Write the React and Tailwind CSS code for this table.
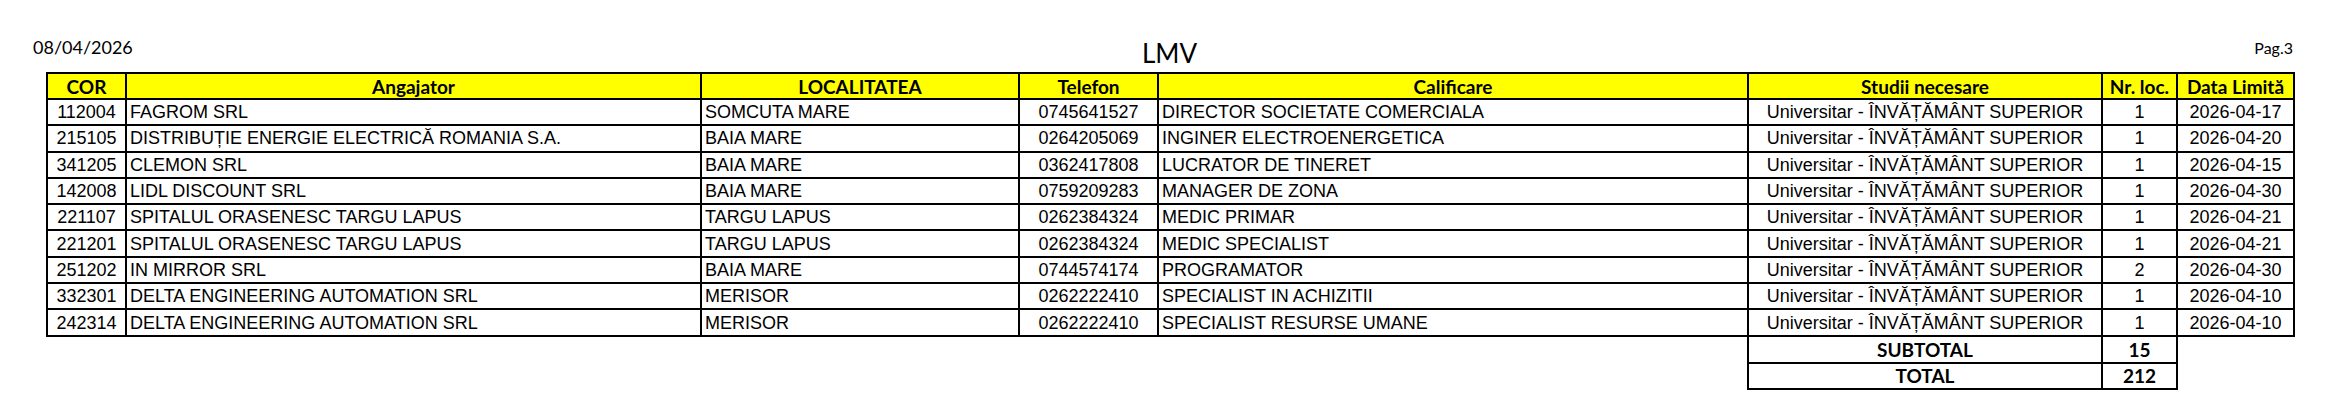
import React from 'react';

const rows = [
    ['112004', 'FAGROM SRL', 'SOMCUTA MARE', '0745641527', 'DIRECTOR SOCIETATE COMERCIALA', '1', '2026-04-17'],
    ['215105', 'DISTRIBUȚIE ENERGIE ELECTRICĂ ROMANIA S.A.', 'BAIA MARE', '0264205069', 'INGINER ELECTROENERGETICA', '1', '2026-04-20'],
    ['341205', 'CLEMON SRL', 'BAIA MARE', '0362417808', 'LUCRATOR DE TINERET', '1', '2026-04-15'],
    ['142008', 'LIDL DISCOUNT SRL', 'BAIA MARE', '0759209283', 'MANAGER DE ZONA', '1', '2026-04-30'],
    ['221107', 'SPITALUL ORASENESC TARGU LAPUS', 'TARGU LAPUS', '0262384324', 'MEDIC PRIMAR', '1', '2026-04-21'],
    ['221201', 'SPITALUL ORASENESC TARGU LAPUS', 'TARGU LAPUS', '0262384324', 'MEDIC SPECIALIST', '1', '2026-04-21'],
    ['251202', 'IN MIRROR SRL', 'BAIA MARE', '0744574174', 'PROGRAMATOR', '2', '2026-04-30'],
    ['332301', 'DELTA ENGINEERING AUTOMATION SRL', 'MERISOR', '0262222410', 'SPECIALIST IN ACHIZITII', '1', '2026-04-10'],
    ['242314', 'DELTA ENGINEERING AUTOMATION SRL', 'MERISOR', '0262222410', 'SPECIALIST RESURSE UMANE', '1', '2026-04-10'],
];

const headers = ['COR', 'Angajator', 'LOCALITATEA', 'Telefon', 'Calificare', 'Studii necesare', 'Nr. loc.', 'Data Limită'];
const widths = ['w-[79px]', 'w-[575px]', 'w-[318px]', 'w-[139px]', 'w-[590px]', 'w-[354px]', 'w-[75px]', 'w-[117px]'];

const head = "font-['Lato','Open_Sans',sans-serif]";
const body = "font-['Liberation_Sans_Narrow','Liberation_Sans',sans-serif]";

const App = () => {
    return (
        <div className="w-[2339px] h-[419px] bg-white text-black">
            {/* page header */}
            <div className="grid grid-cols-[1fr_auto_1fr] items-end px-[33px] pt-[36px] h-[70px] font-['Lato',sans-serif]">
                <span className="text-[18px] leading-none mb-[14px]">08/04/2026</span>
                <span className="text-[26px] leading-none mb-[4px]">LMV</span>
                <span className="text-[16px] leading-none mb-[14px] mr-[13px] text-right">Pag.3</span>
            </div>

            <table className="ml-[46px] mt-[2px] border-collapse table-fixed w-[2247px]">
                <thead>
                    <tr className="h-[26px] bg-[#ffff00]">
                        {headers.map((h, i) => (
                            <th key={h} className={`${widths[i]} border-2 border-black p-0 text-[19px] font-bold leading-none text-center ${head}`}>
                                {h}
                            </th>
                        ))}
                    </tr>
                </thead>
                <tbody>
                    {rows.map((r) => (
                        <tr key={r[0] + r[4]} className={`h-[26.3px] text-[18px] leading-none ${body}`}>
                            <td className="border-2 border-black p-0 text-center">{r[0]}</td>
                            <td className="border-2 border-black py-0 px-[3px] text-left">{r[1]}</td>
                            <td className="border-2 border-black py-0 px-[3px] text-left">{r[2]}</td>
                            <td className="border-2 border-black p-0 text-center">{r[3]}</td>
                            <td className="border-2 border-black py-0 px-[3px] text-left">{r[4]}</td>
                            <td className="border-2 border-black p-0 text-center">Universitar - ÎNVĂȚĂMÂNT SUPERIOR</td>
                            <td className="border-2 border-black p-0 text-center">{r[5]}</td>
                            <td className="border-2 border-black p-0 text-center">{r[6]}</td>
                        </tr>
                    ))}
                    <tr className={`h-[27px] text-[19px] font-bold leading-none ${head}`}>
                        <td colSpan={5} className="p-0"></td>
                        <td className="border-2 border-black p-0 text-center">SUBTOTAL</td>
                        <td className="border-2 border-black p-0 text-center">15</td>
                        <td className="p-0"></td>
                    </tr>
                    <tr className={`h-[26px] text-[19px] font-bold leading-none ${head}`}>
                        <td colSpan={5} className="p-0"></td>
                        <td className="border-2 border-black p-0 text-center">TOTAL</td>
                        <td className="border-2 border-black p-0 text-center">212</td>
                        <td className="p-0"></td>
                    </tr>
                </tbody>
            </table>
        </div>
    );
};

export default App;
